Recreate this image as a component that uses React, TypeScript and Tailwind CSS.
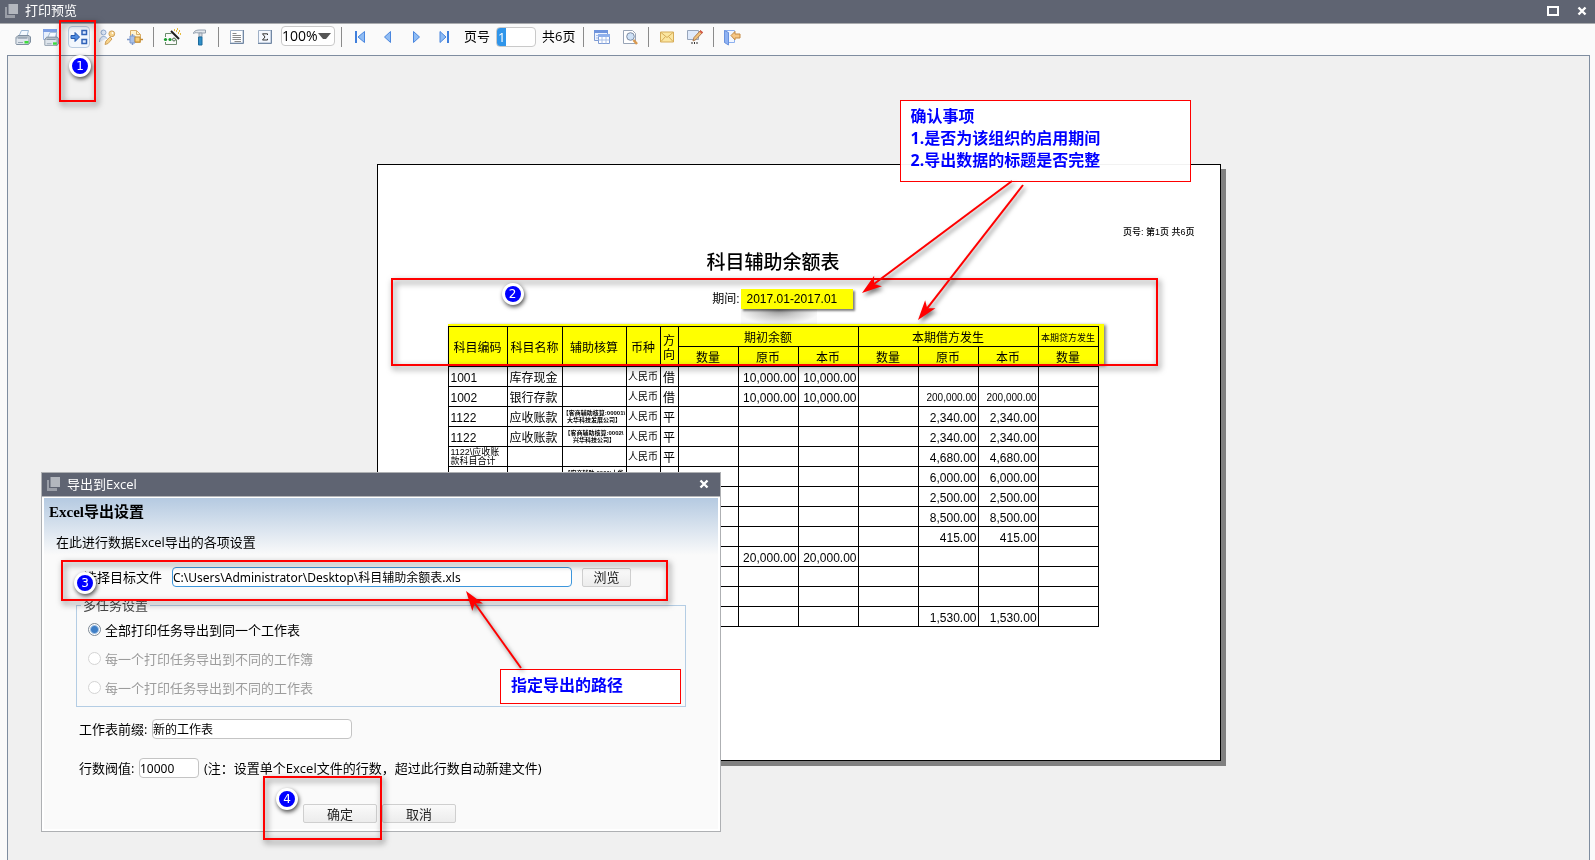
import type { ReactNode } from 'react';
import clsx from 'clsx';

const UI_FONT = "font-['Open_Sans','Noto_Sans_CJK_SC',sans-serif]";
const PRINT_FONT = "font-['Liberation_Sans','Noto_Sans_CJK_SC',sans-serif]";

/* ── Toolbar icons ── */

const Icon = ({ children }: { children: ReactNode }) => (
  <svg width="18" height="18" viewBox="0 0 18 18" fill="none" aria-hidden="true">
    {children}
  </svg>
);

const PrinterShape = () => (
  <>
    <path d="M5 8 7.5 2.500h7L13 8z" fill="#f4f9ff" stroke="#9db8d4" />
    <path d="M2 9.500 4 7.500h11l1.500 1.500v5l-2 2.500H2.500L2 16z" fill="#b4bec8" stroke="#7f8fa0" />
    <path d="M2.500 10.500h11.500v5.500H2.500z" fill="#dfe5ec" />
    <path d="M4 10h9" stroke="#8796a6" />
    <path d="M4 14.500h5" stroke="#98a7b6" />
    <path d="M10.500 13h4v2.500h-4z" fill="#3ddc3d" />
  </>
);

const PrintIcon = () => <Icon><PrinterShape /></Icon>;

const PrintTableIcon = () => (
  <Icon>
    <path d="M1.500 1.500h13v10h-13z" fill="#e8f0fc" stroke="#9db6e4" />
    <path d="M1 1h14v3H1z" fill="#7d9fe4" />
    <g transform="translate(1 2) scale(.95)"><PrinterShape /></g>
  </Icon>
);

const ExportIcon = () => (
  <Icon>
    <path d="M1 7.500h4V4.500L9.500 9 5 13.500v-3H1z" fill="#4f8be0" stroke="#2458ad" />
    <path d="M12 2.500h4.500v4H12zM12 11.500h4.500v4H12z" fill="#dbe9ff" stroke="#2f62b8" strokeWidth="1.500" />
  </Icon>
);

const UserKeyIcon = () => (
  <Icon>
    <circle cx="5.500" cy="4.500" r="2.500" fill="#dbe5f4" stroke="#8fa9cf" />
    <path d="M1.500 14c0-4 2-5.500 4-5.500s3 1 3.500 2" fill="#dbe5f4" stroke="#8fa9cf" />
    <path d="m7 16.500 1-3.500 4-4 2 2-4 4.500z" fill="#f7d48c" stroke="#d0a25c" />
    <circle cx="13.800" cy="5.800" r="2.900" fill="#f7d48c" stroke="#d0a25c" />
    <circle cx="14.500" cy="5" r=".9" fill="#fff" />
  </Icon>
);

const PageGearIcon = () => (
  <Icon>
    <path d="M4.500 2.500h6l4 4v8h-10z" fill="#fff3d0" stroke="#d8ae68" />
    <path d="M10.500 2.500v4h4" stroke="#d8ae68" />
    <path d="M4 8h5v7H4z" fill="#a9c1ea" stroke="#7d99cc" />
    <path d="M1 11.500h3M6.500 6v2M6.500 15v2" stroke="#7d99cc" strokeWidth="1.500" />
    <path d="M9 9h5v5H9z" fill="#f8cf7a" stroke="#c58d35" />
    <path d="M14 11.500h3" stroke="#c58d35" strokeWidth="1.500" />
  </Icon>
);

const WandIcon = () => (
  <Icon>
    <path d="M2.500 9V5.500h6M2.500 14v2.500h11v-5" stroke="#6c8a6c" />
    <path d="m8 3 8 8" stroke="#1d1d1d" strokeWidth="2" />
    <path d="M11 2h1M14 1h1M16 3h1M15 5h1M17 6h1M13 3h1" stroke="#e0a800" strokeWidth="1.500" />
    <circle cx="2.500" cy="11.500" r="1.600" fill="#169a2a" />
    <circle cx="7" cy="11.500" r="1.600" fill="#169a2a" />
    <circle cx="11" cy="11.500" r="1.500" fill="#e6efe6" stroke="#4c6b4c" />
  </Icon>
);

const HammerIcon = () => (
  <Icon>
    <path d="M2.500 4.500C4 2.500 6 2 9 2h5.500v3H9C6 5 4.500 4 2.500 5.500z" fill="#e2e7ec" stroke="#94a0ae" />
    <path d="M8 5h3v4H8z" fill="#d4dae1" stroke="#94a0ae" />
    <path d="M7.500 9h3.500v8H7.500z" fill="#2f8fc8" stroke="#1c6a9c" />
  </Icon>
);

const PageTextIcon = () => (
  <Icon>
    <path d="M2.500 2.500h12.500v12.500h-12.500z" fill="#fff" stroke="#9fb0c6" />
    <path d="M15.500 2v13.500H2" stroke="#7288a4" />
    <path d="M4.500 5.500h4M4.500 7.500h8.500M4.500 9.500h8.500M4.500 11.500h8.500M6.500 13.500h6.500" stroke="#8a8a8a" />
  </Icon>
);

const SigmaIcon = () => (
  <Icon>
    <path d="M2.500 2.500h12.500v12.500h-12.500z" fill="#f4f8ff" stroke="#9fb0c6" />
    <path d="M15.500 2v13.500H2" stroke="#7288a4" />
    <path d="M11.500 7V5.800H6.500L9 9l-2.500 3h5v-1.200" stroke="#333" />
  </Icon>
);

const FirstIcon = () => (
  <Icon>
    <path d="M5 3v12" stroke="#3f7fdc" strokeWidth="2" />
    <path d="M13.500 3.500v11L7 9z" fill="#8fbcf4" stroke="#4a86de" />
  </Icon>
);

const PrevIcon = () => (
  <Icon><path d="M11.500 3.500v11L5.500 9z" fill="#8fbcf4" stroke="#4a86de" /></Icon>
);

const NextIcon = () => (
  <Icon><path d="M6.500 3.500v11l6-5.500z" fill="#8fbcf4" stroke="#4a86de" /></Icon>
);

const LastIcon = () => (
  <Icon>
    <path d="M13 3v12" stroke="#3f7fdc" strokeWidth="2" />
    <path d="M5 3.500v11L11 9z" fill="#8fbcf4" stroke="#4a86de" />
  </Icon>
);

const TablesIcon = () => (
  <Icon>
    <path d="M1.500 2.500h13v10h-13z" fill="#edf3ff" stroke="#7d9bd4" />
    <path d="M1 2h14v3H1z" fill="#6f94dd" />
    <path d="M3 7.500h3M3 10h3" stroke="#a9bfe8" />
    <path d="M5.500 6.500h11v9h-11z" fill="#fff" stroke="#7d9bd4" />
    <path d="M5 6h12v3H5z" fill="#8fb0ec" />
    <path d="M5.500 12h11M9 9v6.500M13 9v6.500" stroke="#a9bfe8" />
  </Icon>
);

const PageSearchIcon = () => (
  <Icon>
    <path d="M2.500 2.500h9l3 3v10h-12z" fill="#fff" stroke="#98a4b6" />
    <circle cx="9.500" cy="8.500" r="3.800" fill="#cfe2f7" stroke="#7d8ca2" />
    <path d="m12.500 12 3.500 4" stroke="#d99a50" strokeWidth="2.500" />
  </Icon>
);

const MailIcon = () => (
  <Icon>
    <path d="M2.500 4h13v10h-13z" fill="#fbe6a0" stroke="#d6ac58" />
    <path d="m3 4.500 6 5 6-5M3 13.500l4.500-5M15 13.500l-4.500-5" stroke="#d6ac58" />
  </Icon>
);

const EditIcon = () => (
  <Icon>
    <path d="M1.500 2.500h11v9h-11z" fill="#dfeafb" stroke="#97a5ba" />
    <path d="m7 13 1-3.500L14.500 2.500l2 2L10 11.500z" fill="#f1c37a" stroke="#a97a55" />
    <path d="m14 3 2.500 2" stroke="#d65a4a" strokeWidth="2" />
    <path d="M6 14v2M8.500 14v2M11 14v2" stroke="#333" />
  </Icon>
);

const ExitIcon = () => (
  <Icon>
    <path d="M1.500 2.500h10v12h-10z" fill="#f1f6ff" stroke="#8db0ee" />
    <path d="m1.500 2.500 4 2v12.500l-4-2.500z" fill="#8fb2f2" stroke="#6a92de" />
    <path d="m8 7.500 4-4v2.500h5v4h-5v2z" fill="#f6c684" stroke="#c48a44" />
  </Icon>
);

const WindowsIcon = () => (
  <svg width="16" height="16" viewBox="0 0 16 16" aria-hidden="true">
    <path d="M1 4h2v8h8v3H1z" fill="#9a9ea7" />
    <path d="M4.500 1H14v10H4.500z" fill="#b3b7be" />
  </svg>
);

const CloseIcon = () => (
  <svg width="10" height="10" viewBox="0 0 10 10" aria-hidden="true">
    <path d="m1.500 1.500 7 7M8.500 1.500l-7 7" stroke="#fff" strokeWidth="2.400" />
  </svg>
);

const ToolButton = ({ label, active, children }: { label: string; active?: boolean; children: ReactNode }) => (
  <button
    aria-label={label}
    className={clsx(
      'flex h-[22px] shrink-0 items-center justify-center',
      active ? 'mx-[3px] w-[22px] rounded border border-[#b9cbe0] bg-[#f2f7fd]' : 'w-7',
    )}
  >
    {children}
  </button>
);

const Separator = () => <div className="mx-1 h-5 w-px shrink-0 bg-[#8b8b8b]" />;

/* ── Annotations ── */

const Frame = ({ className }: { className: string }) => (
  <div
    className={clsx(
      'pointer-events-none absolute border-2 border-[#f00] drop-shadow-[2px_3px_3px_rgba(0,0,0,0.6)]',
      className,
    )}
  />
);

const Badge = ({ n, className }: { n: number; className: string }) => (
  <span
    className={clsx(
      "absolute flex size-[22px] items-center justify-center rounded-full border-[3px] border-white bg-[#00f] font-['DejaVu_Sans',sans-serif] text-[12px] leading-none text-white shadow-[1px_2px_4px_rgba(0,0,0,0.7)]",
      className,
    )}
  >
    {n}
  </span>
);

const Callout = ({ className, children }: { className: string; children: ReactNode }) => (
  <div
    className={clsx(
      "absolute border border-[#f00] bg-white/95 px-[10px] font-['Noto_Sans','Noto_Sans_CJK_SC',sans-serif] text-[16px] leading-[22px] font-bold text-[#00f]",
      className,
    )}
  >
    {children}
  </div>
);

const Arrow = ({ x1, y1, x2, y2 }: { x1: number; y1: number; x2: number; y2: number }) => {
  const angle = (Math.atan2(y2 - y1, x2 - x1) * 180) / Math.PI;
  const length = Math.hypot(x2 - x1, y2 - y1);
  return (
    <g transform={`translate(${x2} ${y2}) rotate(${angle})`}>
      <path d={`M${-length} 0H-12`} stroke="#f00" strokeWidth="2" />
      <path d="M0 0-20-6.500-15 0-20 6.500z" fill="#f00" />
    </g>
  );
};

/* ── Report data ── */

type Row = {
  code?: string;
  name?: string;
  aux?: string;
  currency?: string;
  side?: string;
  amounts?: string[];
};

// amounts: 期初 数量/原币/本币, 借方 数量/原币/本币, 贷方 数量
const ROWS: Row[] = [
  { code: '1001', name: '库存现金', currency: '人民币', side: '借', amounts: ['', '10,000.00', '10,000.00'] },
  { code: '1002', name: '银行存款', currency: '人民币', side: '借', amounts: ['', '10,000.00', '10,000.00', '', '200,000.00', '200,000.00'] },
  { code: '1122', name: '应收账款', aux: '【客商辅助核算:00001\\\n大华科技发展公司】', currency: '人民币', side: '平', amounts: ['', '', '', '', '2,340.00', '2,340.00'] },
  { code: '1122', name: '应收账款', aux: '【客商辅助核算:0002\\\n兴华科技公司】', currency: '人民币', side: '平', amounts: ['', '', '', '', '2,340.00', '2,340.00'] },
  { code: '1122\\应收账款科目合计', currency: '人民币', side: '平', amounts: ['', '', '', '', '4,680.00', '4,680.00'] },
  { aux: '【客商辅助:0001\\大华\n科技发展公司】', amounts: ['', '', '', '', '6,000.00', '6,000.00'] },
  { amounts: ['', '', '', '', '2,500.00', '2,500.00'] },
  { amounts: ['', '', '', '', '8,500.00', '8,500.00'] },
  { amounts: ['', '', '', '', '415.00', '415.00'] },
  { amounts: ['', '20,000.00', '20,000.00'] },
  {},
  {},
  { amounts: ['', '', '', '', '1,530.00', '1,530.00'] },
];

const AMOUNT_COLUMNS = [0, 1, 2, 3, 4, 5, 6];

const ReportTable = () => (
  <table className="mt-[17px] w-[651px] table-fixed border-collapse text-[12px] leading-[14px] [&_td]:overflow-hidden [&_td]:border [&_td]:border-black [&_td]:p-0 [&_th]:border [&_th]:border-black [&_th]:p-0 [&_th]:pt-[3px] [&_th]:font-normal">
    <colgroup>
      <col className="w-[59px]" />
      <col className="w-[55px]" />
      <col className="w-[64px]" />
      <col className="w-[34px]" />
      <col className="w-[18px]" />
      {AMOUNT_COLUMNS.map(i => <col key={i} className="w-[60px]" />)}
    </colgroup>
    <thead>
      <tr className="h-5">
        <th rowSpan={2}>科目编码</th>
        <th rowSpan={2}>科目名称</th>
        <th rowSpan={2}>辅助核算</th>
        <th rowSpan={2}>币种</th>
        <th rowSpan={2}>方向</th>
        <th colSpan={3}>期初余额</th>
        <th colSpan={3}>本期借方发生</th>
        <th className="text-[9px]">本期贷方发生</th>
      </tr>
      <tr className="h-5">
        {['数量', '原币', '本币', '数量', '原币', '本币', '数量'].map((h, i) => <th key={i}>{h}</th>)}
      </tr>
    </thead>
    <tbody>
      {ROWS.map((row, i) => (
        <tr key={i} className="h-5">
          <td className={clsx((row.code?.length ?? 0) > 4 && 'text-[9px] leading-[9px]')}>
            <div className={clsx('px-[2px]', row.code?.length === 4 && 'pt-[2px]')}>{row.code}</div>
          </td>
          <td><div className="px-[2px] pt-[2px]">{row.name}</div></td>
          <td className="text-center text-[6px] leading-[7px] font-bold whitespace-pre">{row.aux}</td>
          <td className="text-center text-[10px]">{row.currency}</td>
          <td className="text-center"><div className="pt-[2px]">{row.side}</div></td>
          {AMOUNT_COLUMNS.map(c => {
            const value = row.amounts?.[c] ?? '';
            return (
              <td key={c} className={clsx('text-right', value.length > 9 && 'text-[10px]')}>
                <div className="pt-[2px] pr-px">{value}</div>
              </td>
            );
          })}
        </tr>
      ))}
    </tbody>
  </table>
);

const ReportPage = () => (
  <div className={clsx('relative h-[597px] w-[844px] shrink-0 border border-black bg-white text-black shadow-[5px_5px_0_#808080]', PRINT_FONT)}>
    <p className="pt-[60px] pr-[25px] text-right text-[9px] leading-[14px] font-medium">页号: 第1页 共6页</p>
    <div className="ml-[70px] w-[651px]">
      <h1 className="mt-3 text-center text-[19px] leading-6 font-medium">科目辅助余额表</h1>
      <p className="mt-[14px] ml-[261px] flex text-[12px] leading-5">
        <span className="w-8 pr-px text-right">期间:</span>
        <span className="relative z-10 w-28 bg-[#ff0] pl-[6px] shadow-[2px_2px_2px_rgba(0,0,0,0.5)]">2017.01-2017.01</span>
      </p>
      <ReportTable />
    </div>

    {/* smudge under the period */}
    <div className="absolute top-[144px] left-[363px] h-[15px] w-[76px] bg-[radial-gradient(ellipse_at_50%_10%,#999_0%,#ccc_35%,#f8f8f8_75%)]" />

    {/* header highlight, the rules stay visible through it */}
    <div className="absolute top-[159px] left-[70px] h-[41px] w-[656px] bg-[#ff0] mix-blend-multiply shadow-[2px_1px_3px_rgba(0,0,0,0.5)]" />

    <Frame className="top-[113px] left-[13px] h-[88px] w-[767px]" />
    <Badge n={2} className="top-[118px] left-[124px]" />

    <Callout className="top-[-65px] left-[522px] h-[82px] w-[291px] pt-1">
      <p>确认事项</p>
      <p>1.是否为该组织的启用期间</p>
      <p>2.导出数据的标题是否完整</p>
    </Callout>
    <svg className="absolute top-[10px] left-[480px] drop-shadow-[2px_3px_2px_rgba(0,0,0,0.5)]" width="180" height="155" viewBox="0 0 180 155">
      <Arrow x1={154} y1={6} x2={4} y2={118} />
      <Arrow x1={165} y1={10} x2={60} y2={145} />
    </svg>
  </div>
);

/* ── Export dialog ── */

const MODES = [
  { label: '全部打印任务导出到同一个工作表', enabled: true },
  { label: '每一个打印任务导出到不同的工作簿', enabled: false },
  { label: '每一个打印任务导出到不同的工作表', enabled: false },
];

const FIELD = "h-5 rounded border bg-white font-['Noto_Sans','Noto_Sans_CJK_SC',sans-serif] text-[12px] leading-4";
const BUTTON = 'h-[19px] rounded-xs border border-[#cfcfcf] bg-linear-to-b from-[#fafafa] to-[#ececec] text-[13px] leading-4 text-[#222]';

const ExportDialog = () => (
  <section
    role="dialog"
    aria-label="导出到Excel"
    className="absolute top-[472px] left-[41px] w-[680px] border border-[#aeb0b3] bg-[#fafafa] text-[13px] leading-5 text-black"
  >
    <header className="flex h-6 items-center border-b border-[#b4b6b9] bg-[#5f6472] pb-[2px] pl-1 text-white">
      <WindowsIcon />
      <span className="ml-[5px] flex-1">导出到Excel</span>
      <button aria-label="关闭" className="mr-[11px]"><CloseIcon /></button>
    </header>

    <div className="border-2 border-t border-white pb-[6px]">
      <div className="h-[57px] bg-linear-to-b from-[#b5cae1] to-[#fafafa] pt-1">
        <h2 className="pl-[5px] font-['Liberation_Serif','Noto_Sans_CJK_SC',serif] text-[15px] leading-5 font-bold">Excel导出设置</h2>
        <p className="mt-[10px] pl-3">在此进行数据Excel导出的各项设置</p>
      </div>

      <div className="mt-3 flex items-center pl-10">
        <label htmlFor="target" className="w-[88px]">选择目标文件</label>
        <input id="target" defaultValue="C:\Users\Administrator\Desktop\科目辅助余额表.xls" className={clsx(FIELD, 'w-[400px] border-[#3c96dc]')} />
        <button className={clsx(BUTTON, 'ml-[10px] w-[49px]')}>浏览</button>
      </div>

      <fieldset className="mt-[11px] ml-8 w-[610px] border border-[#b4cde4] pt-[3px] pb-1 pl-[11px]">
        <legend className="ml-[-7px] px-[2px] leading-[14px] text-[#444]">多任务设置</legend>
        {MODES.map((mode, i) => (
          <label key={mode.label} className={clsx('flex h-[29px] items-center gap-1', !mode.enabled && 'text-[#9c9c9c]')}>
            <input
              type="radio"
              name="mode"
              defaultChecked={i === 0}
              disabled={!mode.enabled}
              className="size-[13px] appearance-none rounded-full border border-[#7c8894] bg-white checked:bg-[radial-gradient(circle,#3f7fc6_0_3px,#fff_5px)] disabled:border-[#d4d4d4]"
            />
            {mode.label}
          </label>
        ))}
      </fieldset>

      <div className="mt-3 flex items-center pl-[35px]">
        <label htmlFor="prefix" className="w-[73px]">工作表前缀:</label>
        <input id="prefix" defaultValue="新的工作表" className={clsx(FIELD, 'w-[200px] border-[#c4c4c4]')} />
      </div>

      <div className="mt-[19px] flex items-center pl-[35px]">
        <label htmlFor="limit" className="w-[60px]">行数阀值:</label>
        <input id="limit" defaultValue="10000" className={clsx(FIELD, 'w-[60px] border-[#c4c4c4]')} />
        <span className="ml-[5px]">(注：设置单个Excel文件的行数，超过此行数自动新建文件)</span>
      </div>

      <div className="mt-[26px] flex gap-[5px] pl-[259px]">
        <button className={clsx(BUTTON, 'w-[74px]')}>确定</button>
        <button className={clsx(BUTTON, 'w-[74px]')}>取消</button>
      </div>
    </div>

    <Frame className="top-[87px] left-[19px] h-[41px] w-[607px]" />
    <Badge n={3} className="top-[99px] left-8" />
    <Frame className="top-[303px] left-[221px] h-16 w-[119px]" />
    <Badge n={4} className="top-[315px] left-[234px]" />
    <Callout className="top-[196px] left-[458px] h-[35px] w-[181px] pt-1">指定导出的路径</Callout>
    <svg className="absolute top-[114px] left-[420px] drop-shadow-[2px_3px_2px_rgba(0,0,0,0.5)]" width="70" height="90" viewBox="0 0 70 90">
      <Arrow x1={59} y1={81} x2={4} y2={4} />
    </svg>
  </section>
);

export default function App() {
  return (
    <div className={clsx('relative flex min-h-screen flex-col bg-[#fafafa] text-[13px] text-black', UI_FONT)}>
      <header className="flex h-6 items-center border-b border-[#a9abae] bg-[#5f6472] pb-[2px] pl-1 text-white">
        <WindowsIcon />
        <span className="ml-[5px] flex-1">打印预览</span>
        <button aria-label="最大化" className="mr-[18px] h-[10px] w-3 border-2 border-white" />
        <button aria-label="关闭" className="mr-[8px]"><CloseIcon /></button>
      </header>

      <nav className="flex h-[31px] items-center pb-[6px] pl-[9px]">
        <ToolButton label="打印"><PrintIcon /></ToolButton>
        <ToolButton label="打印表格"><PrintTableIcon /></ToolButton>
        <ToolButton label="导出" active><ExportIcon /></ToolButton>
        <ToolButton label="权限"><UserKeyIcon /></ToolButton>
        <ToolButton label="页面设置"><PageGearIcon /></ToolButton>
        <Separator />
        <ToolButton label="向导"><WandIcon /></ToolButton>
        <ToolButton label="工具"><HammerIcon /></ToolButton>
        <Separator />
        <ToolButton label="正文"><PageTextIcon /></ToolButton>
        <ToolButton label="合计"><SigmaIcon /></ToolButton>
        <div className="relative mr-[2px] ml-[2px]">
          <select aria-label="缩放" className="h-5 w-[54px] appearance-none rounded border border-[#c9c9c9] bg-white text-[14px] leading-4">
            <option>100%</option>
          </select>
          <svg className="pointer-events-none absolute top-[6px] right-1" width="13" height="8" viewBox="0 0 13 8" aria-hidden="true">
            <path d="M0 1h13L8 7H5z" fill="#555" />
          </svg>
        </div>
        <Separator />
        <ToolButton label="首页"><FirstIcon /></ToolButton>
        <ToolButton label="上一页"><PrevIcon /></ToolButton>
        <ToolButton label="下一页"><NextIcon /></ToolButton>
        <ToolButton label="末页"><LastIcon /></ToolButton>
        <label htmlFor="page" className="ml-[6px]">页号</label>
        <input
          id="page"
          defaultValue="1"
          className="ml-[6px] h-5 w-10 rounded border border-[#c9c9c9] bg-[linear-gradient(to_right,#2f95ea_9px,#fff_9px)] px-px text-[13px] leading-4 text-white"
        />
        <span className="mr-1 ml-[6px]">共6页</span>
        <Separator />
        <ToolButton label="分页"><TablesIcon /></ToolButton>
        <ToolButton label="查找"><PageSearchIcon /></ToolButton>
        <Separator />
        <ToolButton label="邮件"><MailIcon /></ToolButton>
        <ToolButton label="编辑"><EditIcon /></ToolButton>
        <Separator />
        <ToolButton label="退出"><ExitIcon /></ToolButton>
      </nav>

      <main className="mr-[5px] ml-[7px] flex flex-1 justify-center border-x border-t border-[#7f8da0] bg-[#f0f0f0] pt-[108px]">
        <ReportPage />
      </main>

      <Frame className="top-5 left-[59px] h-[82px] w-[37px]" />
      <Badge n={1} className="top-[55px] left-[69px]" />
      <ExportDialog />
    </div>
  );
}
